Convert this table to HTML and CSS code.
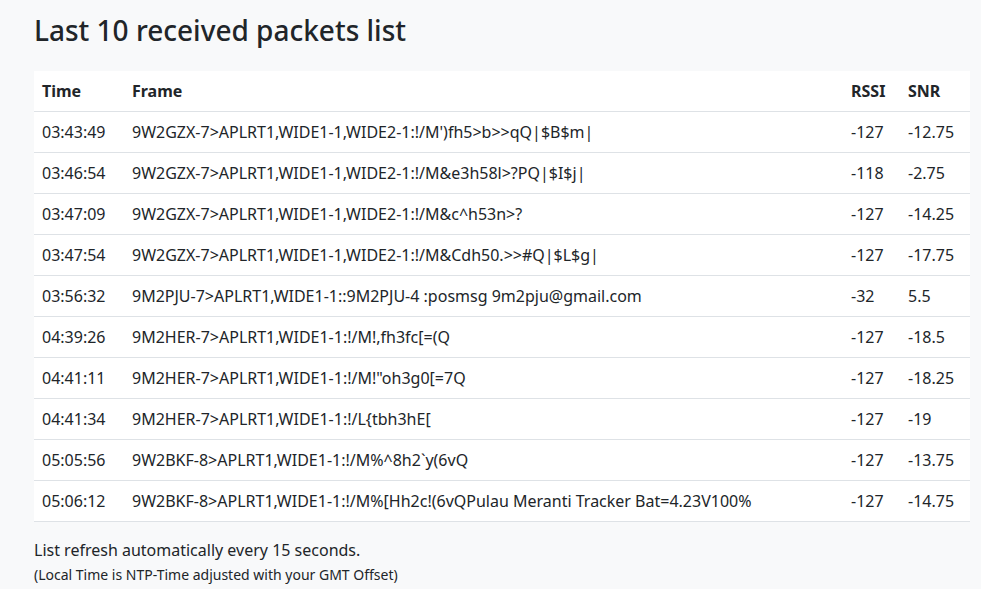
FILE: index.html
```html
<!DOCTYPE html>
<html>
<head>
<meta charset="utf-8">
<link rel="stylesheet" href="styles.css">
</head>
<body>
<div class="page">
  <h3 class="title">Last 10 received packets list</h3>
  <table class="packets">
    <thead>
      <tr><th class="c-time">Time</th><th class="c-frame">Frame</th><th class="c-rssi">RSSI</th><th class="c-snr">SNR</th></tr>
    </thead>
    <tbody>
      <tr><td>03:43:49</td><td>9W2GZX-7&gt;APLRT1,WIDE1-1,WIDE2-1:!/M')fh5&gt;b&gt;&gt;qQ|$B$m|</td><td>-127</td><td>-12.75</td></tr>
      <tr><td>03:46:54</td><td>9W2GZX-7&gt;APLRT1,WIDE1-1,WIDE2-1:!/M&amp;e3h58l&gt;?PQ|$I$j|</td><td>-118</td><td>-2.75</td></tr>
      <tr><td>03:47:09</td><td>9W2GZX-7&gt;APLRT1,WIDE1-1,WIDE2-1:!/M&amp;c^h53n&gt;?</td><td>-127</td><td>-14.25</td></tr>
      <tr><td>03:47:54</td><td>9W2GZX-7&gt;APLRT1,WIDE1-1,WIDE2-1:!/M&amp;Cdh50.&gt;&gt;#Q|$L$g|</td><td>-127</td><td>-17.75</td></tr>
      <tr><td>03:56:32</td><td>9M2PJU-7&gt;APLRT1,WIDE1-1::9M2PJU-4 :posmsg 9m2pju@gmail.com</td><td>-32</td><td>5.5</td></tr>
      <tr><td>04:39:26</td><td>9M2HER-7&gt;APLRT1,WIDE1-1:!/M!,fh3fc[=(Q</td><td>-127</td><td>-18.5</td></tr>
      <tr><td>04:41:11</td><td>9M2HER-7&gt;APLRT1,WIDE1-1:!/M!"oh3g0[=7Q</td><td>-127</td><td>-18.25</td></tr>
      <tr><td>04:41:34</td><td>9M2HER-7&gt;APLRT1,WIDE1-1:!/L{tbh3hE[</td><td>-127</td><td>-19</td></tr>
      <tr><td>05:05:56</td><td>9W2BKF-8&gt;APLRT1,WIDE1-1:!/M%^8h2`y(6vQ</td><td>-127</td><td>-13.75</td></tr>
      <tr><td>05:06:12</td><td>9W2BKF-8&gt;APLRT1,WIDE1-1:!/M%[Hh2c!(6vQPulau Meranti Tracker Bat=4.23V100%</td><td>-127</td><td>-14.75</td></tr>
    </tbody>
  </table>
  <p class="note">List refresh automatically every 15 seconds.</p>
  <p class="note-small">(Local Time is NTP-Time adjusted with your GMT Offset)</p>
</div>
</body>
</html>
```

FILE: styles.css
```css
html, body {
  margin: 0;
  padding: 0;
  background: #f8f9fa;
  color: #212529;
  font-family: "Noto Sans", "Open Sans", sans-serif;
  font-size: 16px;
  line-height: 1.5;
}
.page {
  padding: 14px 11px 0 34px;
}
.title {
  font-size: 28px;
  font-weight: 500;
  line-height: 1.2;
  margin: 0 0 23px 0;
}
.packets {
  width: 936px;
  border-collapse: collapse;
  background: #fff;
  margin-bottom: 16px;
}
.packets th, .packets td {
  padding: 8px;
  text-align: left;
  vertical-align: top;
  white-space: nowrap;
}
.packets th {
  font-weight: 700;
  border-bottom: 1px solid #dee2e6;
}
.packets td {
  border-bottom: 1px solid #dee2e6;
}
.c-time { width: 74px; }
.c-rssi { width: 41px; }
.c-snr { width: 54px; }
.note {
  margin: 0;
}
.note-small {
  margin: 2px 0 0 0;
  font-size: 14px;
}
```
